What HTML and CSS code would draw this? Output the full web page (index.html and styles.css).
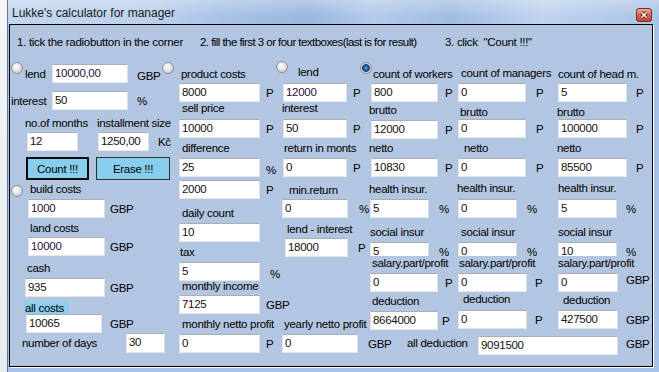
FILE: index.html
```html
<!DOCTYPE html>
<html lang="en">
<head>
  <meta charset="UTF-8" />
  <title>Lukke's calculator for manager</title>
  <link rel="stylesheet" href="styles.css">
</head>
<body>
<div class="desk">
  <div class="behind"></div>
  <div class="window">
    <div class="titlebar">
      <span class="title">Lukke's calculator for manager</span>
      <span class="close">
        <svg width="16" height="14" viewBox="0 0 16 14">
          <defs>
            <linearGradient id="cg" x1="0" y1="0" x2="0" y2="1">
              <stop offset="0" stop-color="#eeb2a2"/>
              <stop offset="0.5" stop-color="#d66449"/>
              <stop offset="1" stop-color="#c6432a"/>
            </linearGradient>
          </defs>
          <rect x="0.5" y="0.5" width="15" height="13" rx="2.5" fill="url(#cg)" stroke="#7e2b1d"/>
          <path d="M5.5 4.5l5 5M10.5 4.5l-5 5" stroke="#4b1b12" stroke-width="3.2"/>
          <path d="M5.5 4.5l5 5M10.5 4.5l-5 5" stroke="#fff" stroke-width="1.6"/>
        </svg>
      </span>
    </div>

    <div class="client">
      <div class="steps">
        <span class="s1">1. tick the radiobutton in the corner</span>
        <span class="s2">2. fill the first 3 or four textboxes(last is for result)</span>
        <span>3. click &nbsp;"Count !!!"</span>
      </div>

      <div class="cols">
        <!-- lend / building -->
        <div class="col c1">
          <div class="line">
            <span class="lead pl-1"><span class="radio top"></span><span class="ml-2">lend</span></span>
            <span class="box w76 ink">10000,00</span>
            <span class="unit ml-9 low">GBP</span>
          </div>
          <div class="line">
            <span class="lead pl-1">interest</span>
            <span class="box w76">50</span>
            <span class="unit ml-9">%</span>
          </div>
          <div class="lbl pair"><span class="w-months">no.of months</span><span>installment size</span></div>
          <div class="line">
            <span class="box w51 ml-17">12</span>
            <span class="box w51 ml-20">1250,00</span>
            <span class="unit ml-9">Kč</span>
          </div>
          <div class="buttons">
            <button class="btn btn-count">Count !!!</button>
            <button class="btn">Erase !!!</button>
          </div>
          <div class="opt pl-1"><span class="radio mt-3"></span><span class="lbl ml-7">build costs</span></div>
          <div class="line"><span class="box w77 ml-18 ink">1000</span><span class="unit ml-5">GBP</span></div>
          <div class="lbl ml-20">land costs</div>
          <div class="line"><span class="box w77 ml-18 ink">10000</span><span class="unit ml-5">GBP</span></div>
          <div class="lbl ml-17">cash</div>
          <div class="line"><span class="box w80 ml-15">935</span><span class="unit ml-5">GBP</span></div>
          <div class="lbl hl ml-14">all costs</div>
          <div class="line"><span class="box w76 ml-16">10065</span><span class="unit ml-8">GBP</span></div>
          <div class="line tall"><span class="lbl w-days ml-12">number of days</span><span class="box w39">30</span></div>
        </div>

        <!-- product -->
        <div class="col c2">
          <div class="opt"><span class="radio ml-n13"></span><span class="lbl mt-5">product costs</span></div>
          <div class="line"><span class="box">8000</span><span class="unit">P</span></div>
          <div class="lbl">sell price</div>
          <div class="line"><span class="box">10000</span><span class="unit">P</span></div>
          <div class="lbl">difference</div>
          <div class="line"><span class="box">25</span><span class="unit low">%</span></div>
          <div class="line"><span class="box">2000</span><span class="unit">P</span></div>
          <div class="lbl">daily count</div>
          <div class="line"><span class="box">10</span></div>
          <div class="lbl ml-5">tax</div>
          <div class="line"><span class="box">5</span><span class="unit ml-10 low">%</span></div>
          <div class="lbl">monthly income</div>
          <div class="line"><span class="box">7125</span><span class="unit">GBP</span></div>
          <div class="lbl">monthly netto profit</div>
          <div class="line"><span class="box">0</span><span class="unit">P</span></div>
        </div>

        <!-- lend return -->
        <div class="col c3">
          <div class="opt"><span class="radio ml-n4"></span><span class="lbl ml-10 mt-4">lend</span></div>
          <div class="line"><span class="box ink">12000</span><span class="unit">P</span></div>
          <div class="lbl ml-2">interest</div>
          <div class="line"><span class="box">50</span><span class="unit">P</span></div>
          <div class="lbl">return in monts</div>
          <div class="line"><span class="box">0</span><span class="unit">P</span></div>
          <div class="lbl ml-9">min.return</div>
          <div class="line"><span class="box w66 ml-2">0</span><span class="unit ml-11">%</span></div>
          <div class="lbl ml-7">lend - interest</div>
          <div class="line"><span class="box w63 ml-5">18000</span><span class="unit ml-10">P</span></div>
          <div class="lbl">yearly netto profit</div>
          <div class="line"><span class="box w76 ml-2">0</span><span class="unit ml-10">GBP</span></div>
        </div>

        <!-- workers -->
        <div class="col c4">
          <div class="opt"><span class="radio on ml-n5"></span><span class="lbl ml-1 mt-5">count of workers</span></div>
          <div class="line"><span class="box ml-6">800</span><span class="unit">P</span></div>
          <div class="lbl">brutto</div>
          <div class="line"><span class="box ml-6">12000</span><span class="unit">P</span></div>
          <div class="lbl">netto</div>
          <div class="line"><span class="box ml-6">10830</span><span class="unit">P</span></div>
          <div class="lbl">health insur.</div>
          <div class="line"><span class="box sm">5</span><span class="unit ml-10">%</span></div>
          <div class="lbl ml-5">social insur</div>
          <div class="line"><span class="box sm">5</span><span class="unit ml-10">%</span></div>
          <div class="lbl cover pl-7">salary.part/profit</div>
          <div class="line"><span class="box w68">0</span><span class="unit">P</span></div>
          <div class="lbl ml-7">deduction</div>
          <div class="line"><span class="box w68">8664000</span><span class="unit ml-4">P</span></div>
          <div class="line total">
            <span class="lbl w-alld">all deduction</span>
            <span class="box w140">9091500</span>
            <span class="unit ml-8 mt-2">GBP</span>
          </div>
        </div>

        <!-- managers -->
        <div class="col c5">
          <div class="lbl ml-6">count of managers</div>
          <div class="line"><span class="box">0</span><span class="unit">P</span></div>
          <div class="lbl">brutto</div>
          <div class="line"><span class="box">0</span><span class="unit">P</span></div>
          <div class="lbl ml-9">netto</div>
          <div class="line"><span class="box">0</span><span class="unit">P</span></div>
          <div class="lbl ml-2">health insur.</div>
          <div class="line"><span class="box sm">0</span><span class="unit">%</span></div>
          <div class="lbl ml-6">social insur</div>
          <div class="line"><span class="box sm">0</span><span class="unit">%</span></div>
          <div class="lbl cover pl-4">salary.part/profit</div>
          <div class="line"><span class="box w69">0</span><span class="unit ml-8">P</span></div>
          <div class="lbl ml-8">deduction</div>
          <div class="line"><span class="box w69">0</span><span class="unit ml-8">P</span></div>
        </div>

        <!-- head managers -->
        <div class="col c6">
          <div class="lbl">count of head m.</div>
          <div class="line"><span class="box">5</span><span class="unit">P</span></div>
          <div class="lbl ml-4">brutto</div>
          <div class="line"><span class="box">100000</span><span class="unit">P</span></div>
          <div class="lbl ml-4">netto</div>
          <div class="line"><span class="box">85500</span><span class="unit">P</span></div>
          <div class="lbl">health insur.</div>
          <div class="line"><span class="box sm">5</span><span class="unit">%</span></div>
          <div class="lbl">social insur</div>
          <div class="line"><span class="box sm">10</span><span class="unit">%</span></div>
          <div class="lbl cover pl-5">salary.part/profit</div>
          <div class="line"><span class="box w60">0</span><span class="unit ml-8 up">GBP</span></div>
          <div class="lbl ml-10">deduction</div>
          <div class="line"><span class="box w60">427500</span><span class="unit ml-8">GBP</span></div>
        </div>
      </div>
    </div>
  </div>
</div>
</body>
</html>
```

FILE: styles.css
```css
* {
  box-sizing: border-box;
}
body {
  margin: 0;
  background: #eceff2;
  font-family: "Liberation Sans", Arial, sans-serif;
  font-size: 11.5px;
  letter-spacing: -0.3px;
  color: #000;
}
.desk {
  display: flex;
  width: 659px;
  height: 372px;
  overflow: hidden;
}
.behind {
  width: 7px;
  flex: none;
  background: linear-gradient(180deg, #f2f4f6 0%, #e9ecef 100%);
}

/* window frame */
.window {
  width: 652px;
  height: 372px;
  flex: none;
  border-left: 1px solid #5e7a9c;
  padding-left: 1px;
  background: #a7c2e6;
}
.titlebar {
  height: 24px;
  margin-left: -1px;
  padding-left: 4px;
  display: flex;
  justify-content: space-between;
  background:
    linear-gradient(180deg, rgba(255,255,255,0.28), rgba(255,255,255,0) 70%),
    linear-gradient(90deg, #c2d5ee 0%, #bcd0ec 22%, #a8c2e6 33%, #99b7df 46%, #b3caea 56%, #a1bde3 68%, #bfd3ee 82%, #a9c3e7 100%);
}
.title {
  font-size: 12px;
  letter-spacing: 0;
  line-height: 26px;
  color: #161a20;
}
.close {
  margin: 8px 7px 0 0;
  height: 14px;
  line-height: 0;
}

.client {
  width: 644px;
  height: 343px;
  border: 1px solid #000;
  box-shadow: 1px 1px 0 #fff;
  background: #b3c6e1;
}
.steps {
  display: flex;
  padding: 10px 0 0 7px;
  line-height: 14px;
  white-space: nowrap;
}
.s1 { width: 183px; }
.s2 { width: 245px; letter-spacing: -0.55px; }

.cols {
  display: flex;
  margin-top: 11px;
}
.col {
  display: grid;
  grid-template-columns: 100%;
  align-content: start;
  align-items: start;
  justify-items: start;
  flex: none;
}
.c1 { width: 165px; padding-top: 4px; grid-template-rows: 27px 25px 16px 25px 25px 17px 22px 16px 24px 17px 24px 12px 19px 20px; }
.c2 { width: 105px; padding-top: 2px; grid-template-rows: 21px 18px 18px 22px 17px 22px 26px 17px 22px 17px 17px 16px 22px 17px 19px; }
.c3 { width: 85px; padding-top: 1px; grid-template-rows: 22px 18px 18px 22px 17px 25px 16px 23px 16px 79px 17px 19px; }
.c4 { width: 90px; padding-top: 2px; grid-template-rows: 21px 20px 17px 21px 17px 24px 17px 26px 17px 14px 17px 21px 17px 25px 19px; }
.c5 { width: 98px; padding-top: 6px; grid-template-rows: 17px 22px 14px 22px 17px 23px 18px 26px 17px 14px 17px 19px 18px 19px; }
.c6 { width: 99px; padding-top: 7px; grid-template-rows: 16px 22px 14px 22px 17px 23px 18px 26px 17px 14px 17px 20px 17px 19px; }

/* column defaults (kept weak so the rules below win) */
:where(.c2) .lbl { margin-left: 7px; }
:where(.c2) .box { margin-left: 4px; width: 81px; }
:where(.c2) .unit { margin-left: 6px; }
:where(.c3) .lbl { margin-left: 4px; }
:where(.c3) .box { margin-left: 3px; width: 64px; }
:where(.c3) .unit { margin-left: 6px; }
:where(.c4) .lbl { margin-left: 4px; }
:where(.c4) .box { margin-left: 5px; width: 67px; }
:where(.c4) .unit { margin-left: 7px; }
:where(.c5) .lbl { margin-left: 5px; }
:where(.c5) .box { margin-left: 3px; width: 68px; }
:where(.c5) .unit { margin-left: 10px; }
:where(.c6) .lbl { margin-left: 5px; }
:where(.c6) .box { margin-left: 5px; width: 69px; }
:where(.c6) .unit { margin-left: 9px; }

/* controls */
.lbl {
  display: block;
  height: 14px;
  line-height: 14px;
  white-space: nowrap;
}
.line {
  display: flex;
  align-items: center;
  height: 19px;
  white-space: nowrap;
}
.opt {
  display: flex;
  align-items: flex-start;
}
.box {
  display: block;
  height: 19px;
  padding-left: 2px;
  line-height: 17px;
  background: #fff;
  border: 1px solid;
  border-color: #abadb3 #dbdfe6 #e3e9ef #e2e3ea;
  color: #111;
  flex: none;
}
.box.sm { width: 59px; }
.ink { color: #2b1040; }
.unit { flex: none; }
.unit.low { margin-top: 5px; }
.unit.up { margin-top: -6px; }
.radio {
  display: block;
  width: 12px;
  height: 12px;
  flex: none;
  border-radius: 50%;
  border: 1px solid #8c8f94;
  background: radial-gradient(circle at 42% 38%, #ffffff 0%, #ececec 35%, #cbcccf 75%, #b6b8bb 100%);
}
.radio.on {
  background: radial-gradient(circle at 50% 50%, #7fc4f0 0, #2a6cb4 1.5px, #123d70 3.5px, #d3d5d8 4.2px, #bfc1c4 100%);
}
.radio.top { align-self: flex-start; margin-top: -2px; }

.lead {
  display: flex;
  align-items: center;
  width: 42px;
  height: 19px;
}
.pair {
  display: flex;
  padding-left: 15px;
}
.w-months { width: 72px; }
.w-days { width: 104px; }
.w-alld { width: 71px; margin-left: 42px; }
.tall { height: 20px; }
.tall .box { height: 20px; }
.total { align-items: flex-start; }
.total .box { margin-left: 0; }

.buttons {
  display: flex;
  gap: 7px;
  padding-left: 16px;
}
.btn {
  width: 74px;
  height: 23px;
  padding: 0;
  background: #87ceee;
  border: 1px solid #2e2e2e;
  font: inherit;
  letter-spacing: inherit;
  color: #000;
}
.btn-count {
  width: 63px;
  border: 2px solid #0c0c0c;
}
.hl {
  width: 45px;
  height: 12px;
  line-height: 12px;
  padding-left: 1px;
  background: #8acfee;
}
.cover {
  margin-left: 0;
  background: #b3c6e1;
  width: 100%;
}

/* sizes and spacing */
.w39 { width: 39px; }
.w51 { width: 51px; }
.w60 { width: 60px; }
.w63 { width: 63px; }
.w66 { width: 66px; }
.w68 { width: 68px; }
.w69 { width: 69px; }
.w76 { width: 76px; }
.w77 { width: 77px; }
.w80 { width: 80px; }
.w140 { width: 140px; }
.pl-1 { padding-left: 1px; }
.pl-4 { padding-left: 4px; }
.pl-5 { padding-left: 5px; }
.pl-7 { padding-left: 7px; }
.mt-2 { margin-top: 2px; }
.mt-3 { margin-top: 3px; }
.mt-4 { margin-top: 4px; }
.mt-5 { margin-top: 5px; }
.ml-n13 { margin-left: -13px; }
.ml-n5 { margin-left: -5px; }
.ml-n4 { margin-left: -4px; }
.ml-1 { margin-left: 1px; }
.ml-2 { margin-left: 2px; }
.ml-4 { margin-left: 4px; }
.ml-5 { margin-left: 5px; }
.ml-6 { margin-left: 6px; }
.ml-7 { margin-left: 7px; }
.ml-8 { margin-left: 8px; }
.ml-9 { margin-left: 9px; }
.ml-10 { margin-left: 10px; }
.ml-11 { margin-left: 11px; }
.ml-12 { margin-left: 12px; }
.ml-14 { margin-left: 14px; }
.ml-15 { margin-left: 15px; }
.ml-16 { margin-left: 16px; }
.ml-17 { margin-left: 17px; }
.ml-18 { margin-left: 18px; }
.ml-20 { margin-left: 20px; }
```
